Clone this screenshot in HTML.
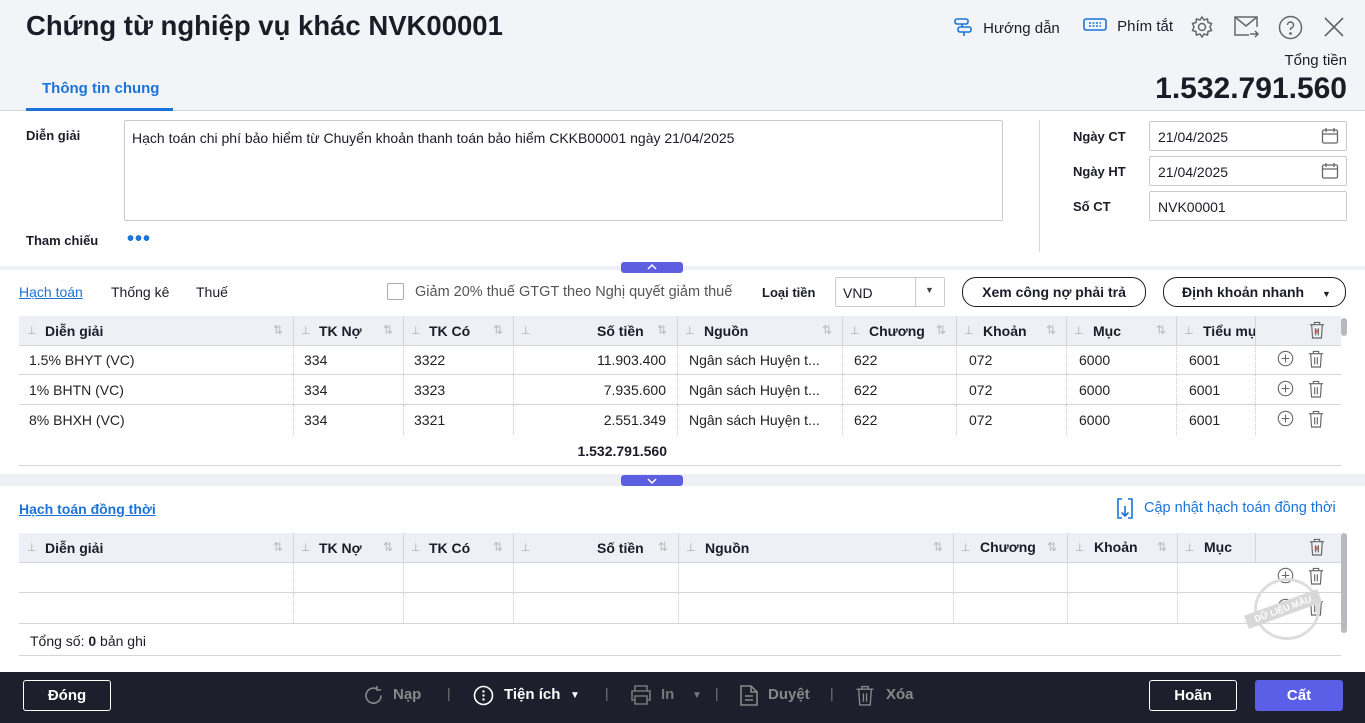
<!DOCTYPE html>
<html><head><meta charset="utf-8">
<style>
*{box-sizing:border-box;margin:0;padding:0}
body{width:1365px;height:723px;overflow:hidden;font-family:"Liberation Sans",sans-serif;color:#1c1c28;background:#fff;position:relative;font-size:14px}
.a{position:absolute}
.hdr{left:0;top:0;width:1365px;height:111px;background:#f3f4f8;border-bottom:1px solid #d4d6dd}
.title{left:26px;top:10px;font-size:27.5px;font-weight:bold;color:#1c1c28}
.inp{border:1px solid #c8cad2;background:#fff;border-radius:2px}
.th{background:#eef0f5;height:30px;border-bottom:1px solid #d4d6dd}
.col{position:absolute;top:0;height:100%;border-left:1px solid #d4d6dd}
.hc{position:absolute;font-weight:bold;font-size:14px;top:7px}
.pin{position:absolute;top:8px;color:#aaa;font-size:11px}
.sort{position:absolute;top:7px;color:#bbb;font-size:12px}
.row{position:absolute;left:19px;width:1322px;height:30px;border-bottom:1px solid #d4d6dd}
.cell{position:absolute;top:7px;font-size:14px;color:#222}
.vl{position:absolute;top:0;height:100%;border-left:1px dotted #ccc}
.btn{border:1px solid #1c1c28;border-radius:14px;height:30px;font-size:14px;font-weight:bold;text-align:center;line-height:28px;background:#fff}
.foot{left:0;top:672px;width:1365px;height:51px;background:#1e1f2d;color:#fff}
.ic{position:absolute}
</style></head><body>
<svg width="0" height="0" style="position:absolute"><defs>
<symbol id="tr" viewBox="0 0 18 20"><g fill="none" stroke="currentColor" stroke-width="1.3"><path d="M1 4h16M6 4V1.5h6V4M3 4l1 15h10l1-15M7.5 8v8M10.5 8v8"/></g></symbol>
<symbol id="pl" viewBox="0 0 20 20"><g fill="none" stroke="currentColor" stroke-width="1.3"><circle cx="10" cy="10" r="8.5"/><path d="M5.5 10h9M10 5.5v9"/></g></symbol>
</defs></svg>
<div class="a hdr"></div>
<div class="a title">Chứng từ nghiệp vụ khác NVK00001</div>
<div class="a" style="left:953px;top:17px;font-size:15px">
<svg width="20" height="20" viewBox="0 0 20 20" style="vertical-align:-4px" fill="none" stroke="#1a73d9" stroke-width="1.6"><rect x="2" y="2" width="13" height="5" rx="2"/><rect x="5" y="10" width="13" height="5" rx="2"/><path d="M9 7v3M11 15v4"/></svg>
<span style="margin-left:6px">Hướng dẫn</span></div>
<div class="a" style="left:1083px;top:17px;font-size:15px">
<svg width="24" height="16" viewBox="0 0 24 16" style="vertical-align:-2px" fill="none" stroke="#1a73d9" stroke-width="1.6"><rect x="1" y="2" width="22" height="11" rx="2"/><path d="M6 6h12M6 9h12" stroke-dasharray="2 1.5"/></svg>
<span style="margin-left:6px">Phím tắt</span></div>
<svg class="a" style="left:1190px;top:15px" width="24" height="24" viewBox="0 0 24 24" fill="none" stroke="#666" stroke-width="1.5"><circle cx="12" cy="12" r="3.5"/><path d="M12 2l2 3 3.5-1 .5 3.5 3.5 1-1.5 3.5 1.5 3.5-3.5 1-.5 3.5-3.5-1-2 3-2-3-3.5 1-.5-3.5-3.5-1 1.5-3.5L2.5 8.5l3.5-1L6.5 4l3.5 1z"/></svg>
<svg class="a" style="left:1233px;top:15px" width="27" height="24" viewBox="0 0 27 24" fill="none" stroke="#666" stroke-width="1.5"><path d="M24 12V2H2v18h14"/><path d="M2 2l11 9 11-9M17 19h8M22 16l3 3-3 3"/></svg>
<svg class="a" style="left:1278px;top:15px" width="25" height="25" viewBox="0 0 25 25" fill="none" stroke="#666" stroke-width="1.5"><circle cx="12.5" cy="12.5" r="11"/><path d="M9.5 10a3 3 0 1 1 4 2.8c-1 .4-1 1.2-1 2.2"/><circle cx="12.5" cy="18.5" r=".6" fill="#666"/></svg>
<svg class="a" style="left:1323px;top:16px" width="22" height="22" viewBox="0 0 22 22" stroke="#666" stroke-width="1.6"><path d="M2 2l18 18M20 2L2 20"/></svg>
<div class="a" style="right:18px;top:52px;font-size:15px">Tổng tiền</div>
<div class="a" style="right:18px;top:72px;font-size:30px;font-weight:bold">1.532.791.560</div>
<div class="a" style="left:42px;top:80px;font-size:15px;font-weight:bold;color:#1a73d9">Thông tin chung</div>
<div class="a" style="left:26px;top:108px;width:147px;height:3px;background:#1a73d9"></div>

<div class="a" style="left:26px;top:128px;font-size:13px;font-weight:bold">Diễn giải</div>
<div class="a inp" style="left:124px;top:120px;width:879px;height:101px;padding:9px 7px;font-size:14px">Hạch toán chi phí bảo hiểm từ Chuyển khoản thanh toán bảo hiểm CKKB00001 ngày 21/04/2025</div>
<div class="a" style="left:26px;top:233px;font-size:13px;font-weight:bold">Tham chiếu</div>
<div class="a" style="left:127px;top:228px;font-size:20px;font-weight:bold;color:#1a73d9;letter-spacing:1px">•••</div>
<div class="a" style="left:1039px;top:120px;height:132px;border-left:1px solid #d4d6dd"></div>
<div class="a" style="left:1073px;top:129px;font-size:13px;font-weight:bold">Ngày CT</div>
<div class="a" style="left:1073px;top:164px;font-size:13px;font-weight:bold">Ngày HT</div>
<div class="a" style="left:1073px;top:199px;font-size:13px;font-weight:bold">Số CT</div>
<div class="a inp" style="left:1149px;top:121px;width:198px;height:30px;padding:7px 8px">21/04/2025</div>
<div class="a inp" style="left:1149px;top:156px;width:198px;height:30px;padding:7px 8px">21/04/2025</div>
<div class="a inp" style="left:1149px;top:191px;width:198px;height:30px;padding:7px 8px">NVK00001</div>
<svg class="a" style="left:1321px;top:127px" width="18" height="18" viewBox="0 0 18 18" fill="none" stroke="#666" stroke-width="1.3"><rect x="1.5" y="3" width="15" height="13" rx="1.5"/><path d="M1.5 7h15M5 1v4M13 1v4"/></svg>
<svg class="a" style="left:1321px;top:162px" width="18" height="18" viewBox="0 0 18 18" fill="none" stroke="#666" stroke-width="1.3"><rect x="1.5" y="3" width="15" height="13" rx="1.5"/><path d="M1.5 7h15M5 1v4M13 1v4"/></svg>

<div class="a" style="left:0;top:266px;width:1365px;height:4px;background:#eef0f5"></div>
<div class="a" style="left:621px;top:262px;width:62px;height:11px;background:#5b5fe0;border-radius:3px"></div>
<svg class="a" style="left:646px;top:263px" width="12" height="8" viewBox="0 0 12 8" fill="none" stroke="#fff" stroke-width="1.5"><path d="M2 6l4-4 4 4"/></svg>

<div class="a" style="left:19px;top:284px;font-size:14px;color:#1a73d9;text-decoration:underline">Hạch toán</div>
<div class="a" style="left:111px;top:284px;font-size:14px">Thống kê</div>
<div class="a" style="left:196px;top:284px;font-size:14px">Thuế</div>
<div class="a" style="left:387px;top:283px;width:17px;height:17px;border:1px solid #aaa;border-radius:2px;background:#fff"></div>
<div class="a" style="left:415px;top:284px;font-size:14.5px;color:#555">Giảm 20% thuế GTGT theo Nghị quyết giảm thuế</div>
<div class="a" style="left:762px;top:285px;font-size:13px;font-weight:bold">Loại tiền</div>
<div class="a inp" style="left:835px;top:277px;width:110px;height:30px;padding:7px 7px">VND</div>
<div class="a" style="left:915px;top:277px;height:30px;border-left:1px solid #c8cad2"></div>
<div class="a" style="left:925px;top:285px;font-size:9px;color:#444">▼</div>
<div class="a btn" style="left:962px;top:277px;width:184px">Xem công nợ phải trả</div>
<div class="a btn" style="left:1163px;top:277px;width:183px;text-align:left;padding-left:18px">Định khoản nhanh <span style="font-size:9px;margin-left:14px">▼</span></div>

<!-- table 1 -->
<div class="a th" style="left:19px;top:316px;width:1322px">
<div class="col" style="left:274px"></div><div class="col" style="left:384px"></div><div class="col" style="left:494px"></div><div class="col" style="left:658px"></div><div class="col" style="left:823px"></div><div class="col" style="left:937px"></div><div class="col" style="left:1047px"></div><div class="col" style="left:1157px"></div><div class="col" style="left:1236px"></div>
<span class="pin" style="left:8px">⊥</span><span class="hc" style="left:26px">Diễn giải</span><span class="sort" style="left:254px">⇅</span>
<span class="pin" style="left:282px">⊥</span><span class="hc" style="left:300px">TK Nợ</span><span class="sort" style="left:364px">⇅</span>
<span class="pin" style="left:392px">⊥</span><span class="hc" style="left:410px">TK Có</span><span class="sort" style="left:474px">⇅</span>
<span class="pin" style="left:502px">⊥</span><span class="hc" style="left:578px">Số tiền</span><span class="sort" style="left:638px">⇅</span>
<span class="pin" style="left:666px">⊥</span><span class="hc" style="left:685px">Nguồn</span><span class="sort" style="left:803px">⇅</span>
<span class="pin" style="left:831px">⊥</span><span class="hc" style="left:850px">Chương</span><span class="sort" style="left:917px">⇅</span>
<span class="pin" style="left:945px">⊥</span><span class="hc" style="left:964px">Khoản</span><span class="sort" style="left:1027px">⇅</span>
<span class="pin" style="left:1055px">⊥</span><span class="hc" style="left:1074px">Mục</span><span class="sort" style="left:1137px">⇅</span>
<span class="pin" style="left:1165px">⊥</span><span class="hc" style="left:1184px;width:52px;overflow:hidden;white-space:nowrap">Tiểu mục</span>
<svg class="ic" style="left:1290px;top:5px;color:#666" width="16" height="18"><use href="#tr"/></svg><span class="a" style="left:1295px;top:11px;color:#e33;font-size:8px;font-weight:bold">×</span>
</div>
<div class="a" style="left:1341px;top:318px;width:6px;height:18px;background:#b8bac0;border-radius:3px"></div>

<div class="row" style="top:345px"><div class="vl" style="left:274px"></div><div class="vl" style="left:384px"></div><div class="vl" style="left:494px"></div><div class="vl" style="left:658px"></div><div class="vl" style="left:823px"></div><div class="vl" style="left:937px"></div><div class="vl" style="left:1047px"></div><div class="vl" style="left:1157px"></div><div class="vl" style="left:1236px"></div>
<span class="cell" style="left:10px">1.5% BHYT (VC)</span><span class="cell" style="left:285px">334</span><span class="cell" style="left:395px">3322</span><span class="cell" style="left:500px;width:147px;text-align:right">11.903.400</span><span class="cell" style="left:670px">Ngân sách Huyện t...</span><span class="cell" style="left:835px">622</span><span class="cell" style="left:950px">072</span><span class="cell" style="left:1060px">6000</span><span class="cell" style="left:1170px">6001</span>
<svg class="ic" style="left:1258px;top:5px;color:#666" width="17" height="17"><use href="#pl"/></svg><svg class="ic" style="left:1289px;top:5px;color:#666" width="16" height="18"><use href="#tr"/></svg></div>
<div class="row" style="top:375px"><div class="vl" style="left:274px"></div><div class="vl" style="left:384px"></div><div class="vl" style="left:494px"></div><div class="vl" style="left:658px"></div><div class="vl" style="left:823px"></div><div class="vl" style="left:937px"></div><div class="vl" style="left:1047px"></div><div class="vl" style="left:1157px"></div><div class="vl" style="left:1236px"></div>
<span class="cell" style="left:10px">1% BHTN (VC)</span><span class="cell" style="left:285px">334</span><span class="cell" style="left:395px">3323</span><span class="cell" style="left:500px;width:147px;text-align:right">7.935.600</span><span class="cell" style="left:670px">Ngân sách Huyện t...</span><span class="cell" style="left:835px">622</span><span class="cell" style="left:950px">072</span><span class="cell" style="left:1060px">6000</span><span class="cell" style="left:1170px">6001</span>
<svg class="ic" style="left:1258px;top:5px;color:#666" width="17" height="17"><use href="#pl"/></svg><svg class="ic" style="left:1289px;top:5px;color:#666" width="16" height="18"><use href="#tr"/></svg></div>
<div class="row" style="top:405px;border-bottom:none"><div class="vl" style="left:274px"></div><div class="vl" style="left:384px"></div><div class="vl" style="left:494px"></div><div class="vl" style="left:658px"></div><div class="vl" style="left:823px"></div><div class="vl" style="left:937px"></div><div class="vl" style="left:1047px"></div><div class="vl" style="left:1157px"></div><div class="vl" style="left:1236px"></div>
<span class="cell" style="left:10px">8% BHXH (VC)</span><span class="cell" style="left:285px">334</span><span class="cell" style="left:395px">3321</span><span class="cell" style="left:500px;width:147px;text-align:right">2.551.349</span><span class="cell" style="left:670px">Ngân sách Huyện t...</span><span class="cell" style="left:835px">622</span><span class="cell" style="left:950px">072</span><span class="cell" style="left:1060px">6000</span><span class="cell" style="left:1170px">6001</span>
<svg class="ic" style="left:1258px;top:5px;color:#666" width="17" height="17"><use href="#pl"/></svg><svg class="ic" style="left:1289px;top:5px;color:#666" width="16" height="18"><use href="#tr"/></svg></div>
<div class="a" style="left:519px;top:443px;width:148px;text-align:right;font-weight:bold;font-size:14px">1.532.791.560</div>
<div class="a" style="left:19px;top:465px;width:1322px;border-top:1px solid #d4d6dd"></div>

<div class="a" style="left:0;top:474px;width:1365px;height:12px;background:#eef0f5"></div>
<div class="a" style="left:621px;top:475px;width:62px;height:11px;background:#5b5fe0;border-radius:3px"></div>
<svg class="a" style="left:646px;top:477px" width="12" height="8" viewBox="0 0 12 8" fill="none" stroke="#fff" stroke-width="1.5"><path d="M2 2l4 4 4-4"/></svg>

<div class="a" style="left:19px;top:501px;font-size:14px;font-weight:bold;color:#1a73d9;text-decoration:underline">Hạch toán đồng thời</div>
<svg class="a" style="left:1116px;top:498px" width="18" height="22" viewBox="0 0 18 22" fill="none" stroke="#1a73d9" stroke-width="1.6"><path d="M6 1H2v19h4M12 1h4v19h-4M9 8v10M5.5 14.5L9 18l3.5-3.5"/></svg>
<div class="a" style="left:1144px;top:500px;font-size:14.5px;color:#1a73d9">Cập nhật hạch toán đồng thời</div>

<div class="a th" style="left:19px;top:533px;width:1322px">
<div class="col" style="left:274px"></div><div class="col" style="left:384px"></div><div class="col" style="left:494px"></div><div class="col" style="left:659px"></div><div class="col" style="left:934px"></div><div class="col" style="left:1048px"></div><div class="col" style="left:1158px"></div><div class="col" style="left:1236px"></div>
<span class="pin" style="left:8px">⊥</span><span class="hc" style="left:26px">Diễn giải</span><span class="sort" style="left:254px">⇅</span>
<span class="pin" style="left:282px">⊥</span><span class="hc" style="left:300px">TK Nợ</span><span class="sort" style="left:364px">⇅</span>
<span class="pin" style="left:392px">⊥</span><span class="hc" style="left:410px">TK Có</span><span class="sort" style="left:474px">⇅</span>
<span class="pin" style="left:502px">⊥</span><span class="hc" style="left:578px">Số tiền</span><span class="sort" style="left:639px">⇅</span>
<span class="pin" style="left:667px">⊥</span><span class="hc" style="left:686px">Nguồn</span><span class="sort" style="left:914px">⇅</span>
<span class="pin" style="left:942px">⊥</span><span class="hc" style="left:961px;top:6px">Chương</span><span class="sort" style="left:1028px">⇅</span>
<span class="pin" style="left:1056px">⊥</span><span class="hc" style="left:1075px;top:6px">Khoản</span><span class="sort" style="left:1138px">⇅</span>
<span class="pin" style="left:1166px">⊥</span><span class="hc" style="left:1185px;top:6px">Mục</span>
<svg class="ic" style="left:1290px;top:5px;color:#666" width="16" height="18"><use href="#tr"/></svg><span class="a" style="left:1295px;top:11px;color:#e33;font-size:8px;font-weight:bold">×</span>
</div>
<div class="a" style="left:1341px;top:533px;width:6px;height:100px;background:#b8bac0;border-radius:3px"></div>
<div class="row" style="top:562px;height:31px"><div class="vl" style="left:274px"></div><div class="vl" style="left:384px"></div><div class="vl" style="left:494px"></div><div class="vl" style="left:659px"></div><div class="vl" style="left:934px"></div><div class="vl" style="left:1048px"></div><div class="vl" style="left:1158px"></div>
<svg class="ic" style="left:1258px;top:5px;color:#666" width="17" height="17"><use href="#pl"/></svg><svg class="ic" style="left:1289px;top:5px;color:#666" width="16" height="18"><use href="#tr"/></svg></div>
<div class="row" style="top:593px;height:31px"><div class="vl" style="left:274px"></div><div class="vl" style="left:384px"></div><div class="vl" style="left:494px"></div><div class="vl" style="left:659px"></div><div class="vl" style="left:934px"></div><div class="vl" style="left:1048px"></div><div class="vl" style="left:1158px"></div>
<svg class="ic" style="left:1258px;top:5px;color:#666" width="17" height="17"><use href="#pl"/></svg><svg class="ic" style="left:1289px;top:5px;color:#666" width="16" height="18"><use href="#tr"/></svg></div>
<div class="a" style="left:1254px;top:578px;width:66px;height:62px;border:3px solid #ddd;border-radius:50%"></div>
<div class="a" style="left:1244px;top:602px;width:78px;height:14px;background:#d8d8d8;transform:rotate(-20deg);color:#fff;font-size:9px;font-weight:bold;text-align:center;line-height:14px">DỮ LIỆU MẪU</div>
<div class="a" style="left:30px;top:633px;font-size:14px">Tổng số: <b>0</b> bản ghi</div>
<div class="a" style="left:19px;top:655px;width:1322px;border-top:1px solid #d4d6dd"></div>

<div class="a foot"></div>
<div class="a" style="left:23px;top:680px;width:88px;height:31px;border:1px solid #fff;border-radius:3px;color:#fff;font-weight:bold;text-align:center;line-height:29px;font-size:15px">Đóng</div>
<svg class="a" style="left:363px;top:685px" width="21" height="21" viewBox="0 0 21 21" fill="none" stroke="#888" stroke-width="1.6"><path d="M18 10.5A7.5 7.5 0 1 1 14 4M14 1v4h4"/></svg>
<div class="a" style="left:393px;top:686px;color:#888;font-size:15px;font-weight:bold">Nạp</div>
<div class="a" style="left:447px;top:685px;color:#777">|</div>
<svg class="a" style="left:473px;top:685px" width="21" height="21" viewBox="0 0 21 21"><circle cx="10.5" cy="10.5" r="9" fill="none" stroke="#fff" stroke-width="1.6"/><circle cx="10.5" cy="6.5" r="1.2" fill="#fff"/><circle cx="10.5" cy="10.5" r="1.2" fill="#fff"/><circle cx="10.5" cy="14.5" r="1.2" fill="#fff"/></svg>
<div class="a" style="left:504px;top:686px;color:#fff;font-size:15px;font-weight:bold">Tiện ích</div>
<div class="a" style="left:570px;top:690px;color:#fff;font-size:10px">▼</div>
<div class="a" style="left:605px;top:685px;color:#777">|</div>
<svg class="a" style="left:630px;top:685px" width="22" height="20" viewBox="0 0 22 20" fill="none" stroke="#777" stroke-width="1.6"><path d="M5 6V1h12v5M5 15H2V6h18v9h-3M5 11h12v8H5z"/></svg>
<div class="a" style="left:661px;top:686px;color:#777;font-size:15px;font-weight:bold">In</div>
<div class="a" style="left:692px;top:690px;color:#777;font-size:10px">▼</div>
<div class="a" style="left:715px;top:685px;color:#777">|</div>
<svg class="a" style="left:740px;top:685px" width="18" height="21" viewBox="0 0 18 21" fill="none" stroke="#888" stroke-width="1.6"><path d="M1 1h10l6 6v13H1zM11 1v6h6M5 11h8M5 15h8"/></svg>
<div class="a" style="left:768px;top:686px;color:#888;font-size:15px;font-weight:bold">Duyệt</div>
<div class="a" style="left:830px;top:685px;color:#777">|</div>
<svg class="a" style="left:855px;top:685px;color:#888" width="20" height="21"><use href="#tr"/></svg>
<div class="a" style="left:886px;top:686px;color:#888;font-size:15px;font-weight:bold">Xóa</div>
<div class="a" style="left:1149px;top:680px;width:88px;height:31px;border:1px solid #fff;border-radius:3px;color:#fff;font-weight:bold;text-align:center;line-height:29px;font-size:15px">Hoãn</div>
<div class="a" style="left:1255px;top:680px;width:88px;height:31px;background:#5b5fe8;border-radius:3px;color:#fff;font-weight:bold;text-align:center;line-height:31px;font-size:15px">Cất</div>
</body></html>
